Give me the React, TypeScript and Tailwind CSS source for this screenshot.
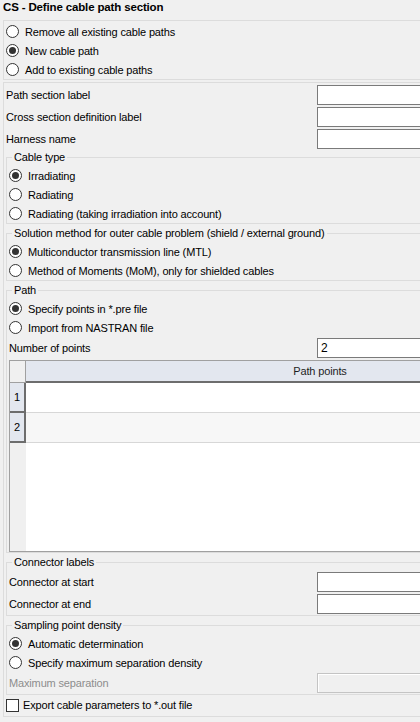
import React from 'react';

const font = { fontFamily: '"Liberation Sans", Arial, sans-serif' };

const Radio: React.FC<{ checked?: boolean }> = ({ checked }) => (
  <svg width="13" height="13" viewBox="0 0 13 13" className="shrink-0">
    <circle cx="6.5" cy="6.5" r="6" fill="#fff" stroke="#333" strokeWidth="1" />
    {checked && <circle cx="6.5" cy="6.5" r="3.5" fill="#333" />}
  </svg>
);

const RadioRow: React.FC<{ label: string; checked?: boolean }> = ({ label, checked }) => (
  <div className="flex h-[19px] items-center gap-[6px]">
    <Radio checked={checked} />
    <span className="whitespace-nowrap pt-[1px]">{label}</span>
  </div>
);

// label + text box; the box always starts at x=317
const FieldRow: React.FC<{ label: string; labelWidth: string; value?: string; disabled?: boolean }> = ({
  label,
  labelWidth,
  value,
  disabled,
}) => (
  <div className="flex h-[22px] items-center">
    <span className={`${labelWidth} shrink-0 whitespace-nowrap ${disabled ? 'text-[#8d8d8d]' : 'text-black'}`}>{label}</span>
    {disabled ? (
      <div className="h-[20px] w-[220px] shrink-0 border border-[#c4c4c4] bg-[#f0f0f0] shadow-[inset_1px_1px_0_#fff]" />
    ) : (
      <div className="flex h-[20px] w-[220px] shrink-0 items-center border border-[#7a7a7a] bg-white px-[3px] text-[12px]">{value}</div>
    )}
  </div>
);

const Group: React.FC<{ title: string; children: React.ReactNode; className?: string }> = ({ title, children, className }) => (
  <fieldset className={`border border-[#dcdcdc] px-[2px] ${className ?? ''}`}>
    <legend className="ml-[3px] px-[2px] leading-[15px]">{title}</legend>
    <div className="pt-[1px]">{children}</div>
  </fieldset>
);

const PathTable: React.FC = () => (
  <div className="mt-[1px] flex h-[192px] flex-col border border-[#a0a0a0] bg-white">
    <div className="flex h-[22px] shrink-0">
      <div className="w-[16px] shrink-0 border-r border-b border-[#a0a0a0] bg-[#f0f0f0]" />
      <div className="flex flex-1 items-center justify-center border-b-2 border-[#6d6d6d] bg-[#e3e7ef] text-[#1e1e1e]">
        Path points
      </div>
    </div>
    {['1', '2'].map((n, i) => (
      <div key={n} className="flex h-[30px] shrink-0">
        <div className="flex w-[16px] shrink-0 items-center justify-center border-r-2 border-b-2 border-[#6d6d6d] bg-[#e3e7ef]">
          {n}
        </div>
        <div className={`flex-1 border-b border-[#d7d7d7] ${i === 1 ? 'bg-[#f7f7f7]' : 'bg-white'}`} />
      </div>
    ))}
    <div className="flex flex-1">
      <div className="w-[16px] shrink-0 bg-[#f0f0f0]" />
      <div className="flex-1 bg-white" />
    </div>
  </div>
);

export default function App() {
  return (
    <div
      className="h-[722px] w-[420px] overflow-hidden bg-[#f0f0f0] text-[11px] tracking-[-0.15px] text-black"
      style={font}
    >
      <div className="w-[618px]">
        <div className="h-[20px] pl-[3px] text-[11.5px] font-bold leading-[15px]">CS - Define cable path section</div>

        <div className="ml-[3px] border-y border-l border-[#dcdcdc] pt-[1px] pl-[2px]">
          <RadioRow label="Remove all existing cable paths" />
          <RadioRow label="New cable path" checked />
          <RadioRow label="Add to existing cable paths" />
        </div>

        <div className="mt-[2px] ml-[3px] border-y border-l border-[#dcdcdc] pt-[1px] pl-[2px]">
          <FieldRow label="Path section label" labelWidth="w-[311px]" />
          <FieldRow label="Cross section definition label" labelWidth="w-[311px]" />
          <FieldRow label="Harness name" labelWidth="w-[311px]" />

          <Group title="Cable type">
            <RadioRow label="Irradiating" checked />
            <RadioRow label="Radiating" />
            <RadioRow label="Radiating (taking irradiation into account)" />
          </Group>

          <Group title="Solution method for outer cable problem (shield / external ground)" className="mt-[2px]">
            <RadioRow label="Multiconductor transmission line (MTL)" checked />
            <RadioRow label="Method of Moments (MoM), only for shielded cables" />
          </Group>

          <Group title="Path" className="mt-[2px]">
            <RadioRow label="Specify points in *.pre file" checked />
            <RadioRow label="Import from NASTRAN file" />
            <FieldRow label="Number of points" labelWidth="w-[308px]" value="2" />
            <PathTable />
          </Group>

          <Group title="Connector labels" className="mt-[2px]">
            <FieldRow label="Connector at start" labelWidth="w-[308px]" />
            <FieldRow label="Connector at end" labelWidth="w-[308px]" />
          </Group>

          <Group title="Sampling point density" className="mt-[2px]">
            <RadioRow label="Automatic determination" checked />
            <RadioRow label="Specify maximum separation density" />
            <FieldRow label="Maximum separation" labelWidth="w-[308px]" disabled />
          </Group>

          <div className="flex h-[21px] items-center gap-[4px]">
            <div className="h-[13px] w-[13px] shrink-0 border border-[#333] bg-white" />
            <span className="whitespace-nowrap">Export cable parameters to *.out file</span>
          </div>
        </div>
      </div>
    </div>
  );
}
